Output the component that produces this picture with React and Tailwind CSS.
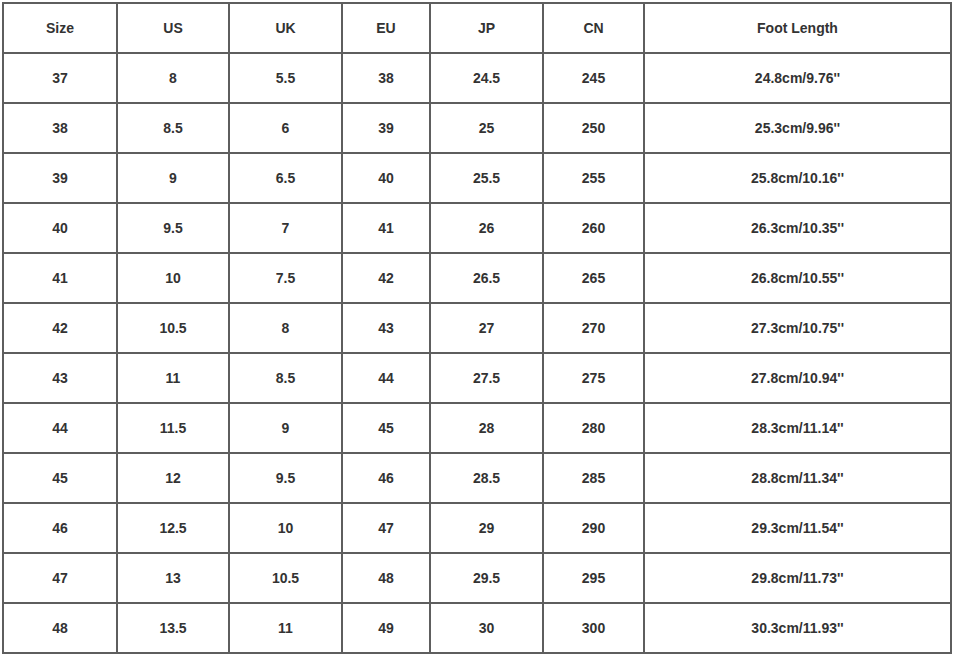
const headers = ["Size", "US", "UK", "EU", "JP", "CN", "Foot Length"];

const rows = [
  ["37", "8", "5.5", "38", "24.5", "245", "24.8cm/9.76''"],
  ["38", "8.5", "6", "39", "25", "250", "25.3cm/9.96''"],
  ["39", "9", "6.5", "40", "25.5", "255", "25.8cm/10.16''"],
  ["40", "9.5", "7", "41", "26", "260", "26.3cm/10.35''"],
  ["41", "10", "7.5", "42", "26.5", "265", "26.8cm/10.55''"],
  ["42", "10.5", "8", "43", "27", "270", "27.3cm/10.75''"],
  ["43", "11", "8.5", "44", "27.5", "275", "27.8cm/10.94''"],
  ["44", "11.5", "9", "45", "28", "280", "28.3cm/11.14''"],
  ["45", "12", "9.5", "46", "28.5", "285", "28.8cm/11.34''"],
  ["46", "12.5", "10", "47", "29", "290", "29.3cm/11.54''"],
  ["47", "13", "10.5", "48", "29.5", "295", "29.8cm/11.73''"],
  ["48", "13.5", "11", "49", "30", "300", "30.3cm/11.93''"],
];

function Cell({ children }) {
  return (
    <div className="h-[50px] flex items-center justify-center border-r-2 border-b-2 border-[#5e5e5e] text-[14px] font-bold text-[#333333]">
      {children}
    </div>
  );
}

export default function App() {
  return (
    <div className="w-[954px] h-[657px] bg-white overflow-hidden" style={{ fontFamily: '"Liberation Sans", Arial, sans-serif' }}>
      <div className="ml-[2px] mt-[2px] w-[950px] grid grid-cols-[114px_112px_113px_88px_113px_101px_307px] border-t-2 border-l-2 border-[#5e5e5e]">
        {headers.map((h) => (
          <Cell key={h}>{h}</Cell>
        ))}
        {rows.map((r, i) =>
          r.map((v, j) => <Cell key={i + "-" + j}>{v}</Cell>)
        )}
      </div>
    </div>
  );
}
